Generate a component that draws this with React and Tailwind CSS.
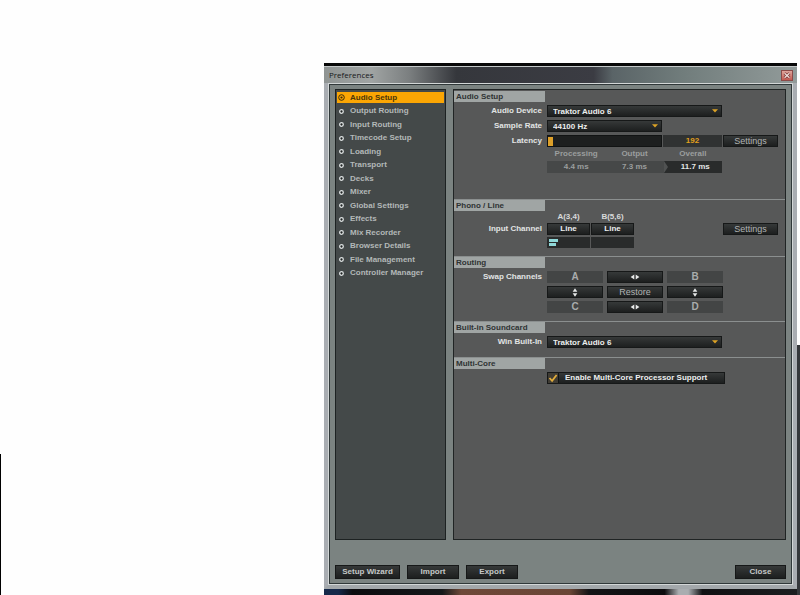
import { useState } from 'react';
import clsx from 'clsx';

const PAGES = [
  'Audio Setup',
  'Output Routing',
  'Input Routing',
  'Timecode Setup',
  'Loading',
  'Transport',
  'Decks',
  'Mixer',
  'Global Settings',
  'Effects',
  'Mix Recorder',
  'Browser Details',
  'File Management',
  'Controller Manager',
];

const darkFace = 'border border-[#161818] bg-linear-to-b from-[#363939] to-[#1d1f1f]';

function Button({ children, className, ...props }) {
  return (
    <button type="button" className={clsx('flex items-center justify-center', darkFace, className)} {...props}>
      {children}
    </button>
  );
}

function Section({ title, className, children }) {
  return (
    <section className={className}>
      <h2 className="h-[11px] w-[91px] bg-[#a0a5a4] pl-[2px] leading-[11px] text-[#2f3333]">{title}</h2>
      {children}
    </section>
  );
}

function Row({ label, htmlFor, className, children }) {
  return (
    <div className={clsx('flex items-center', className)}>
      <label htmlFor={htmlFor} className="mr-[5px] w-[88px] shrink-0 text-right text-[#e2e4e4]">
        {label}
      </label>
      {children}
    </div>
  );
}

function Select({ id, value, className }) {
  return (
    <div className={clsx('relative h-3', className)}>
      <select
        id={id}
        defaultValue={value}
        className={clsx('block h-full w-full appearance-none pl-[5px] text-[#eceeee] outline-none', darkFace)}
      >
        <option>{value}</option>
      </select>
      <svg viewBox="0 0 6 4" className="pointer-events-none absolute top-1 right-1 h-1 w-[6px]">
        <path d="M0 0.3h6L3 3.6z" fill="#dda325" />
      </svg>
    </div>
  );
}

function SwapHorizontal() {
  return (
    <svg viewBox="0 0 10 6" className="h-[6px] w-[10px]" fill="#e6e8e8">
      <path d="M4.3 0.4v5.2L0.6 3zM5.7 0.4v5.2L9.4 3z" />
    </svg>
  );
}

function SwapVertical() {
  return (
    <svg viewBox="0 0 6 10" className="h-[9px] w-[6px]" fill="#e6e8e8">
      <path d="M0.4 4.2h5.2L3 0.4zM0.4 5.8h5.2L3 9.6z" />
    </svg>
  );
}

function Deck({ children }) {
  return (
    <div className="flex items-center justify-center bg-[#434545] text-[10px] text-[#a9acac]">{children}</div>
  );
}

function Sidebar({ active, onSelect }) {
  return (
    <nav className="w-[111px] shrink-0 border border-[#1d2222] bg-[#444949] px-px pt-px">
      <ul className="grid h-[189px] auto-rows-fr">
        {PAGES.map((page) => (
          <li key={page} className="flex items-center">
            <a
              href="#"
              onClick={() => onSelect(page)}
              className={clsx(
                'flex h-[11px] w-full items-center gap-[5px] pl-px',
                page === active ? 'bg-[#fba604] text-[#4c3608]' : 'text-[#b3b8b8]'
              )}
            >
              <svg viewBox="0 0 7 7" className="h-[7px] w-[7px]" fill="none">
                {page === active ? (
                  <>
                    <circle cx="3.5" cy="3.5" r="2.8" stroke="#3c2c0a" strokeWidth="1" />
                    <circle cx="3.5" cy="3.5" r="1.1" fill="#3c2c0a" />
                  </>
                ) : (
                  <circle cx="3.5" cy="3.5" r="1.8" fill="#1e2222" stroke="#dfe3e3" strokeWidth="1.3" />
                )}
              </svg>
              {page}
            </a>
          </li>
        ))}
      </ul>
    </nav>
  );
}

function LatencyTable() {
  return (
    <table className="ml-[93px] w-[175px] table-fixed border-collapse text-center text-[#9b9e9e]">
      <thead>
        <tr className="h-[14px]">
          <th>Processing</th>
          <th>Output</th>
          <th>Overall</th>
        </tr>
      </thead>
      <tbody>
        <tr className="h-3 bg-[#464848]">
          <td className="p-0">4.4 ms</td>
          <td className="p-0">7.3 ms</td>
          <td className="bg-[#292b2b] p-0 text-[#e4e6e6]">
            <div className="flex h-3 items-center">
              <svg viewBox="0 0 5 12" className="h-3 w-[5px]">
                <path d="M0 0l4 6-4 6z" fill="#505252" />
              </svg>
              <span className="flex-1">11.7 ms</span>
            </div>
          </td>
        </tr>
      </tbody>
    </table>
  );
}

function AudioSetup() {
  const [latency, setLatency] = useState(192);
  const [multiCore, setMultiCore] = useState(true);

  return (
    <main className="min-w-0 flex-1 border border-[#202424] bg-[#575858] pt-px">
      <Section title="Audio Setup" className="h-[108px]">
        <Row label="Audio Device" htmlFor="device" className="mt-[3px]">
          <Select id="device" value="Traktor Audio 6" className="w-[175px]" />
        </Row>
        <Row label="Sample Rate" htmlFor="rate" className="mt-[3px]">
          <Select id="rate" value="44100 Hz" className="w-[115px]" />
        </Row>
        <Row label="Latency" htmlFor="latency" className="mt-[3px]">
          <input
            id="latency"
            type="range"
            min="192"
            max="4096"
            value={latency}
            onChange={(e) => setLatency(Number(e.target.value))}
            className="h-3 w-[115px] appearance-none border border-[#111313] bg-[#1d1f1f] [&::-webkit-slider-thumb]:h-[9px] [&::-webkit-slider-thumb]:w-[5px] [&::-webkit-slider-thumb]:appearance-none [&::-webkit-slider-thumb]:bg-[#dda02a]"
          />
          <output className="ml-px flex h-3 w-[59px] items-center justify-center bg-[#303232] text-[#e2a01c]">
            {latency}
          </output>
          <Button className="mr-[7px] ml-auto h-3 w-[55px] text-[9px] font-normal text-[#b0b3b3]">Settings</Button>
        </Row>
        <LatencyTable />
      </Section>

      <Section title="Phono / Line" className="h-[57px] border-t border-[#8b8f8f]">
        <div className="ml-[93px] flex gap-px text-center text-[#d8dada]">
          <span className="w-[43px]">A(3,4)</span>
          <span className="w-[43px]">B(5,6)</span>
        </div>
        <Row label="Input Channel" htmlFor="line-a">
          <div className="flex gap-px text-[#eceeee]">
            <Button id="line-a" className="h-3 w-[43px]">Line</Button>
            <Button className="h-3 w-[43px]">Line</Button>
          </div>
          <Button className="mr-[7px] ml-auto h-3 w-[55px] text-[9px] font-normal text-[#b0b3b3]">Settings</Button>
        </Row>
        <div className="mt-[2px] ml-[93px] flex gap-px">
          <div className="flex h-[11px] w-[43px] flex-col justify-center gap-px bg-[#292b2b] pl-[2px]">
            <div className="h-[3px] w-[9px] bg-[#8fd8d8]" />
            <div className="h-[3px] w-[7px] bg-[#8fd8d8]" />
          </div>
          <div className="h-[11px] w-[43px] bg-[#292b2b]" />
        </div>
      </Section>

      <Section title="Routing" className="h-[65px] border-t border-[#8b8f8f]">
        <div className="mt-[3px] flex">
          <span className="mr-[5px] w-[88px] shrink-0 text-right leading-3 text-[#e2e4e4]">Swap Channels</span>
          <div className="grid auto-rows-[12px] grid-cols-[56px_56px_56px] gap-x-1 gap-y-[3px]">
            <Deck>A</Deck>
            <Button aria-label="Swap A and B"><SwapHorizontal /></Button>
            <Deck>B</Deck>
            <Button aria-label="Swap A and C"><SwapVertical /></Button>
            <Button className="text-[9px] font-normal text-[#b0b3b3]">Restore</Button>
            <Button aria-label="Swap B and D"><SwapVertical /></Button>
            <Deck>C</Deck>
            <Button aria-label="Swap C and D"><SwapHorizontal /></Button>
            <Deck>D</Deck>
          </div>
        </div>
      </Section>

      <Section title="Built-in Soundcard" className="h-[36px] border-t border-[#8b8f8f]">
        <Row label="Win Built-In" htmlFor="builtin" className="mt-[3px]">
          <Select id="builtin" value="Traktor Audio 6" className="w-[175px]" />
        </Row>
      </Section>

      <Section title="Multi-Core" className="border-t border-[#8b8f8f]">
        <label className={clsx('mt-[3px] ml-[93px] flex h-3 w-[178px] items-center text-[#eceeee]', darkFace)}>
          <span className="relative mr-[6px] flex h-[10px] w-[11px] border-r border-[#111313] bg-[#403c34]">
            <input
              type="checkbox"
              checked={multiCore}
              onChange={(e) => setMultiCore(e.target.checked)}
              className="h-full w-full appearance-none"
            />
            {multiCore && (
              <svg viewBox="0 0 10 10" className="pointer-events-none absolute inset-0 h-full w-full" fill="none">
                <path d="M1.5 5l2.6 2.8L8.6 2" stroke="#e0ac3c" strokeWidth="1.8" />
              </svg>
            )}
          </span>
          Enable Multi-Core Processor Support
        </label>
      </Section>
    </main>
  );
}

function TitleBar() {
  return (
    <header className="flex h-[17px] items-center justify-between border-t border-[#c3c8c8] bg-[linear-gradient(90deg,#8f9493_0%,#a0a4a3_10%,#7b7f80_18%,#35373c_28%,#3b3c43_57%,#5a6467_61%,#717d7c_76%,#929b9a_100%)] pr-1 pl-[5px]">
      <h1 className="font-['Open_Sans',sans-serif] text-[8px] font-normal text-[#16181a]">Preferences</h1>
      <button
        type="button"
        aria-label="Close window"
        className="flex h-[11px] w-3 items-center justify-center border border-[#8b4a48] bg-linear-to-b from-[#dfa49c] to-[#c25a52]"
      >
        <svg viewBox="0 0 8 7" className="h-[7px] w-2" fill="none">
          <path d="M1.6 1.2l4.8 4.6M6.4 1.2L1.6 5.8" stroke="#7b3837" strokeWidth="2.8" />
          <path d="M1.6 1.2l4.8 4.6M6.4 1.2L1.6 5.8" stroke="#f0dedb" strokeWidth="1.2" />
        </svg>
      </button>
    </header>
  );
}

export default function App() {
  const [active, setActive] = useState('Audio Setup');

  return (
    <div className="flex min-h-screen bg-[#fefefe] font-['Liberation_Sans',sans-serif] text-[8px] leading-[12px] font-bold">
      <div className="mt-auto h-[141px] w-px bg-black" />
      <div className="ml-[323px] flex flex-1 flex-col pt-[63px]">
        <div className="flex flex-1 flex-col border-t-[3px] border-[#080808]">
          <TitleBar />
          <div className="flex flex-1 flex-col border-x-4 border-b-4 border-x-[#a9adb2] border-b-[#a3a8ab]">
            <div className="flex flex-1 flex-col border border-[#d3d7d7]">
              <div className="flex flex-1 flex-col border border-[#303839] bg-[#7b8381] px-[5px] pt-1 pb-1">
                <div className="flex h-[451px] gap-[7px]">
                  <Sidebar active={active} onSelect={setActive} />
                  <AudioSetup />
                </div>
                <footer className="mt-auto flex gap-[7px] text-[#c4c7c7]">
                  <Button className="h-[14px] w-[65px]">Setup Wizard</Button>
                  <Button className="h-[14px] w-[52px]">Import</Button>
                  <Button className="h-[14px] w-[52px]">Export</Button>
                  <Button className="ml-auto h-[14px] w-[51px]">Close</Button>
                </footer>
              </div>
            </div>
          </div>
        </div>
        <div className="h-[6px] bg-[linear-gradient(90deg,#16294a_0%,#16294a_3%,#0c0c0f_6%,#15181a_25%,#6e4838_29%,#6a4636_52%,#141416_56%,#0c0c0e_72%,#a9adb0_75%,#a9adb0_77%,#101113_80%,#1c1e20_100%)]" />
      </div>
      <div className="mt-auto h-[250px] w-[3px] bg-[#35383b]" />
    </div>
  );
}
